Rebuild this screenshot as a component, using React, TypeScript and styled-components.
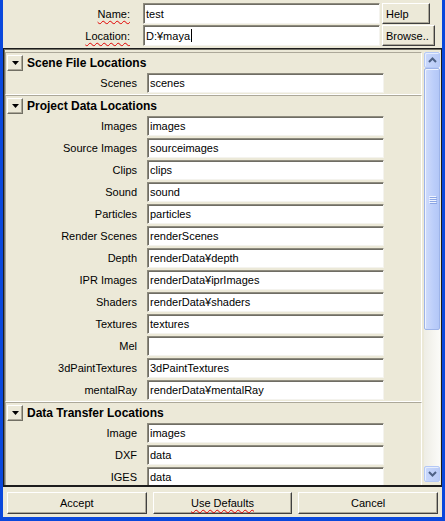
import styled, { createGlobalStyle } from 'styled-components'

const GlobalStyle = createGlobalStyle`
  html, body { margin: 0; padding: 0; }
  body {
    font-family: 'Liberation Sans', Arial, sans-serif;
    font-size: 11px;
    color: #000;
  }
`

const sections = [
  {
    title: 'Scene File Locations',
    rows: [['Scenes', 'scenes']],
  },
  {
    title: 'Project Data Locations',
    rows: [
      ['Images', 'images'],
      ['Source Images', 'sourceimages'],
      ['Clips', 'clips'],
      ['Sound', 'sound'],
      ['Particles', 'particles'],
      ['Render Scenes', 'renderScenes'],
      ['Depth', 'renderData¥depth'],
      ['IPR Images', 'renderData¥iprImages'],
      ['Shaders', 'renderData¥shaders'],
      ['Textures', 'textures'],
      ['Mel', ''],
      ['3dPaintTextures', '3dPaintTextures'],
      ['mentalRay', 'renderData¥mentalRay'],
    ],
  },
  {
    title: 'Data Transfer Locations',
    rows: [
      ['Image', 'images'],
      ['DXF', 'data'],
      ['IGES', 'data'],
    ],
  },
]

const Window = styled.div`
  width: 445px;
  height: 521px;
  box-sizing: border-box;
  background: #0a48dc;
  padding: 0 3px 4px 3px;
  display: flex;
`

const Panel = styled.div`
  flex: 1;
  min-width: 0;
  background: #ece9d8;
  display: flex;
  flex-direction: column;
`

const TopForm = styled.div`
  display: grid;
  grid-template-columns: 140px 237px auto;
  grid-auto-rows: 21px;
  row-gap: 1px;
  padding: 3px 0 2px 0;
  align-items: center;
`

const Label = styled.span<{ $squiggle?: boolean }>`
  text-align: right;
  padding-right: 13px;
  white-space: nowrap;
  text-decoration: ${({ $squiggle }) => ($squiggle ? 'underline wavy #e00000' : 'none')};
  text-decoration-thickness: 1px;
  text-underline-offset: 2px;
`

const Field = styled.div<{ $h?: number }>`
  box-sizing: border-box;
  height: ${({ $h }) => $h ?? 21}px;
  background: #fff;
  border: 1px solid;
  border-color: #8e8b7e #f4f3ee #f4f3ee #8e8b7e;
  box-shadow: inset 1px 1px #6f6d64;
  padding: 0 0 0 2px;
  display: flex;
  align-items: center;
  white-space: nowrap;
  overflow: hidden;
`

const Caret = styled.span`
  display: inline-block;
  width: 1px;
  height: 13px;
  background: #000;
  margin-left: 1px;
`

const SideButton = styled.button<{ $w: number }>`
  box-sizing: border-box;
  width: ${({ $w }) => $w}px;
  height: 21px;
  margin-left: 2px;
  font: inherit;
  text-align: left;
  padding: 0 0 0 3px;
  background: #ece9d8;
  border: 1px solid;
  border-color: #fff #404040 #404040 #fff;
  box-shadow: inset -1px -1px #aca899;
  color: #000;
`

const Pane = styled.div`
  flex: 1;
  min-height: 0;
  display: flex;
  border: 1px solid #1c1c1c;
  border-bottom-width: 2px;
  box-shadow: inset 1px 1px #716f64;
`

const Content = styled.div`
  flex: 1;
  min-width: 0;
  overflow: hidden;
  padding: 3px 2px 0 1px;
`

const Section = styled.div`
  border: 1px solid;
  border-color: #aca899 #fff #fff #aca899;
`

const Header = styled.div`
  height: 19px;
  display: flex;
  align-items: center;
  gap: 4px;
  padding-left: 1px;
  font-weight: bold;
  font-size: 12px;
`

const Collapse = styled.div`
  box-sizing: border-box;
  width: 16px;
  height: 16px;
  background: #ece9d8;
  border: 1px solid;
  border-color: #fff #716f64 #716f64 #fff;
  box-shadow: inset -1px -1px #aca899;
  display: flex;
  align-items: center;
  justify-content: center;
`

const Row = styled.div`
  height: 22px;
  display: grid;
  grid-template-columns: 131px 237px;
  column-gap: 10px;
  align-items: center;
`

const RowLabel = styled.span`
  text-align: right;
  white-space: nowrap;
`

const Scrollbar = styled.div`
  width: 16px;
  margin: 3px 1px 3px 0;
  display: flex;
  flex-direction: column;
  background: linear-gradient(to right, #eeede5, #fbfbf8);
`

const ArrowButton = styled.div`
  box-sizing: border-box;
  width: 16px;
  height: 16px;
  border: 1px solid #b4c8f6;
  border-radius: 2px;
  background: linear-gradient(to right, #c9d8fc, #b9cbf6);
  box-shadow: inset 1px 1px #e6eefd;
  display: flex;
  align-items: center;
  justify-content: center;
`

const Track = styled.div`
  flex: 1;
  display: flex;
  flex-direction: column;
`

const Thumb = styled.div`
  box-sizing: border-box;
  height: 262px;
  border: 1px solid #9db3e8;
  border-radius: 2px;
  background: linear-gradient(to right, #d0dcfb, #bccefa 60%, #b3c7f7);
  box-shadow: inset 1px 1px #eef3fe;
  display: flex;
  align-items: center;
  justify-content: center;
`

const Grip = styled.div`
  display: flex;
  flex-direction: column;
  gap: 1px;
  & > span {
    display: block;
    width: 7px;
    height: 1px;
    background: #eef3fe;
    box-shadow: 1px 1px #8ca6e4;
  }
`

const Footer = styled.div`
  height: 30px;
  box-sizing: border-box;
  padding: 5px 4px 0 4px;
  display: grid;
  grid-template-columns: repeat(3, 1fr);
  column-gap: 6px;
`

const FooterButton = styled.button`
  box-sizing: border-box;
  height: 22px;
  font: inherit;
  font-size: 11px;
  background: #ece9d8;
  color: #000;
  border: 1px solid;
  border-color: #fff #404040 #404040 #fff;
  box-shadow: inset -1px -1px #aca899;
  padding: 0;
`

const Squiggle = styled.span`
  text-decoration: underline wavy #e00000;
  text-decoration-thickness: 1px;
  text-underline-offset: 2px;
`

const DownTri = () => (
  <svg width="7" height="4" viewBox="0 0 7 4">
    <path d="M0 0h7L3.5 4z" fill="#000" />
  </svg>
)

const Chevron = ({ up }: { up?: boolean }) => (
  <svg width="9" height="6" viewBox="0 0 9 6">
    <path
      d={up ? 'M1 5L4.5 1.5L8 5' : 'M1 1L4.5 4.5L8 1'}
      fill="none"
      stroke="#4d6185"
      strokeWidth="2"
    />
  </svg>
)

export default function App() {
  return (
    <>
      <GlobalStyle />
      <Window>
        <Panel>
          <TopForm>
            <Label $squiggle>Name:</Label>
            <Field>test</Field>
            <SideButton $w={48}>Help</SideButton>
            <Label $squiggle>Location:</Label>
            <Field>
              D:¥maya
              <Caret />
            </Field>
            <SideButton $w={53}>Browse..</SideButton>
          </TopForm>

          <Pane>
            <Content>
              {sections.map((s) => (
                <Section key={s.title}>
                  <Header>
                    <Collapse>
                      <DownTri />
                    </Collapse>
                    {s.title}
                  </Header>
                  {s.rows.map(([label, value]) => (
                    <Row key={label}>
                      <RowLabel>{label}</RowLabel>
                      <Field $h={20}>{value}</Field>
                    </Row>
                  ))}
                </Section>
              ))}
            </Content>
            <Scrollbar>
              <ArrowButton>
                <Chevron up />
              </ArrowButton>
              <Track>
                <Thumb>
                  <Grip>
                    <span />
                    <span />
                    <span />
                    <span />
                  </Grip>
                </Thumb>
              </Track>
              <ArrowButton>
                <Chevron />
              </ArrowButton>
            </Scrollbar>
          </Pane>

          <Footer>
            <FooterButton>Accept</FooterButton>
            <FooterButton>
              <Squiggle>Use Defaults</Squiggle>
            </FooterButton>
            <FooterButton>Cancel</FooterButton>
          </Footer>
        </Panel>
      </Window>
    </>
  )
}
